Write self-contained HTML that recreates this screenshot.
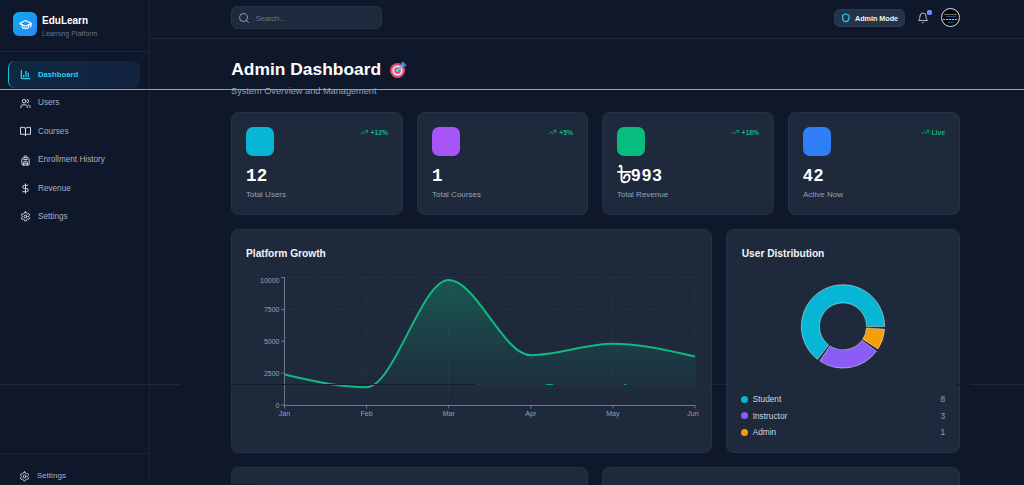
<!DOCTYPE html>
<html><head><meta charset="utf-8"><title>EduLearn Admin Dashboard</title>
<style>
*{box-sizing:border-box;margin:0;padding:0}
html,body{width:1024px;height:485px;overflow:hidden;background:#0f172a;font-family:"Liberation Sans",sans-serif}
.t{position:absolute;white-space:nowrap}
.ic{position:absolute;display:block}
.bx{position:absolute}
.card{position:absolute;background:#1e293b;border:1px solid #243247;border-radius:7.5px}
</style></head><body>
<div class="bx" style="left:149px;top:0;width:1px;height:485px;background:#19233a"></div>
<div class="bx" style="left:0;top:51px;width:149px;height:1px;background:#19233a"></div>
<div class="bx" style="left:0;top:453px;width:149px;height:1px;background:#19233a"></div>
<div class="bx" style="left:13px;top:12px;width:24px;height:24px;border-radius:6px;background:linear-gradient(135deg,#0aaaf0,#2b87f6)"></div>
<svg class="ic" style="left:18.5px;top:17.5px;width:13px;height:13px" viewBox="0 0 24 24" fill="none" stroke="#ffffff" stroke-width="2.2" stroke-linecap="round" stroke-linejoin="round"><path d="M21.42 10.922a1 1 0 0 0-.019-1.838L12.83 5.18a2 2 0 0 0-1.66 0L2.6 9.08a1 1 0 0 0 0 1.832l8.57 3.908a2 2 0 0 0 1.66 0z"/><path d="M22 10v6"/><path d="M6 12.5V16a6 3 0 0 0 12 0v-3.5"/></svg>
<div class="t" style="left:42px;top:16.23px;font-size:10px;line-height:10px;color:#ffffff;font-weight:bold;">EduLearn</div>
<div class="t" style="left:42px;top:30.07px;font-size:7px;line-height:7px;color:#64748b;font-weight:normal;">Learning Platform</div>
<div class="bx" style="left:8px;top:61px;width:132px;height:26.5px;border-radius:6.5px;background:linear-gradient(90deg,#0e2943,#13233f);border-left:1.5px solid #0cc0e0"></div>
<svg class="ic" style="left:19.5px;top:68.9px;width:11px;height:11px" viewBox="0 0 24 24" fill="none" stroke="#22d3ee" stroke-width="2.7" stroke-linecap="round" stroke-linejoin="round"><path d="M3 3v16a2 2 0 0 0 2 2h16"/><path d="M18 17V9"/><path d="M13 17V5"/><path d="M8 17v-3"/></svg>
<div class="t" style="left:38px;top:70.88px;font-size:7.7px;line-height:7.7px;color:#22d3ee;font-weight:bold;">Dashboard</div>
<svg class="ic" style="left:19.5px;top:97.65px;width:11px;height:11px" viewBox="0 0 24 24" fill="none" stroke="#e2e8f0" stroke-width="2" stroke-linecap="round" stroke-linejoin="round"><path d="M16 21v-2a4 4 0 0 0-4-4H6a4 4 0 0 0-4 4v2"/><circle cx="9" cy="7" r="4"/><path d="M22 21v-2a4 4 0 0 0-3-3.87"/><path d="M16 3.13a4 4 0 0 1 0 7.75"/></svg>
<div class="t" style="left:38px;top:99.21px;font-size:8.2px;line-height:8.2px;color:#a3b1c5;font-weight:normal;">Users</div>
<svg class="ic" style="left:19.5px;top:126.10000000000002px;width:11px;height:11px" viewBox="0 0 24 24" fill="none" stroke="#e2e8f0" stroke-width="2" stroke-linecap="round" stroke-linejoin="round"><path d="M2 3h6a4 4 0 0 1 4 4v14a3 3 0 0 0-3-3H2z"/><path d="M22 3h-6a4 4 0 0 0-4 4v14a3 3 0 0 1 3-3h7z"/></svg>
<div class="t" style="left:38px;top:127.66px;font-size:8.2px;line-height:8.2px;color:#a3b1c5;font-weight:normal;">Courses</div>
<svg class="ic" style="left:19.5px;top:154.55px;width:11px;height:11px" viewBox="0 0 24 24" fill="none" stroke="#e2e8f0" stroke-width="2" stroke-linecap="round" stroke-linejoin="round"><path d="M4 10a4 4 0 0 1 4-4h8a4 4 0 0 1 4 4v10a2 2 0 0 1-2 2H6a2 2 0 0 1-2-2Z"/><path d="M8 10h8"/><path d="M8 18h8"/><path d="M8 22v-6a2 2 0 0 1 2-2h4a2 2 0 0 1 2 2v6"/><path d="M9 6V4a2 2 0 0 1 2-2h2a2 2 0 0 1 2 2v2"/></svg>
<div class="t" style="left:38px;top:156.11px;font-size:8.2px;line-height:8.2px;color:#a3b1c5;font-weight:normal;">Enrollment History</div>
<svg class="ic" style="left:19.5px;top:183.0px;width:11px;height:11px" viewBox="0 0 24 24" fill="none" stroke="#e2e8f0" stroke-width="2" stroke-linecap="round" stroke-linejoin="round"><line x1="12" x2="12" y1="2" y2="22"/><path d="M17 5H9.5a3.5 3.5 0 0 0 0 7h5a3.5 3.5 0 0 1 0 7H6"/></svg>
<div class="t" style="left:38px;top:184.56px;font-size:8.2px;line-height:8.2px;color:#a3b1c5;font-weight:normal;">Revenue</div>
<svg class="ic" style="left:19.5px;top:211.45000000000002px;width:11px;height:11px" viewBox="0 0 24 24" fill="none" stroke="#e2e8f0" stroke-width="2" stroke-linecap="round" stroke-linejoin="round"><path d="M12.22 2h-.44a2 2 0 0 0-2 2v.18a2 2 0 0 1-1 1.73l-.43.25a2 2 0 0 1-2 0l-.15-.08a2 2 0 0 0-2.73.73l-.22.38a2 2 0 0 0 .73 2.73l.15.1a2 2 0 0 1 1 1.72v.51a2 2 0 0 1-1 1.74l-.15.09a2 2 0 0 0-.73 2.73l.22.38a2 2 0 0 0 2.73.73l.15-.08a2 2 0 0 1 2 0l.43.25a2 2 0 0 1 1 1.730V20a2 2 0 0 0 2 2h.44a2 2 0 0 0 2-2v-.18a2 2 0 0 1 1-1.73l.43-.25a2 2 0 0 1 2 0l.15.08a2 2 0 0 0 2.73-.73l.22-.39a2 2 0 0 0-.73-2.73l-.15-.08a2 2 0 0 1-1-1.74v-.5a2 2 0 0 1 1-1.74l.15-.09a2 2 0 0 0 .73-2.73l-.22-.38a2 2 0 0 0-2.73-.73l-.15.08a2 2 0 0 1-2 0l-.43-.25a2 2 0 0 1-1-1.73V4a2 2 0 0 0-2-2z"/><circle cx="12" cy="12" r="3"/></svg>
<div class="t" style="left:38px;top:213.01px;font-size:8.2px;line-height:8.2px;color:#a3b1c5;font-weight:normal;">Settings</div>
<svg class="ic" style="left:18.5px;top:470.5px;width:11px;height:11px" viewBox="0 0 24 24" fill="none" stroke="#cbd5e1" stroke-width="2" stroke-linecap="round" stroke-linejoin="round"><path d="M12.22 2h-.44a2 2 0 0 0-2 2v.18a2 2 0 0 1-1 1.73l-.43.25a2 2 0 0 1-2 0l-.15-.08a2 2 0 0 0-2.73.73l-.22.38a2 2 0 0 0 .73 2.73l.15.1a2 2 0 0 1 1 1.72v.51a2 2 0 0 1-1 1.74l-.15.09a2 2 0 0 0-.73 2.73l.22.38a2 2 0 0 0 2.73.73l.15-.08a2 2 0 0 1 2 0l.43.25a2 2 0 0 1 1 1.730V20a2 2 0 0 0 2 2h.44a2 2 0 0 0 2-2v-.18a2 2 0 0 1 1-1.73l.43-.25a2 2 0 0 1 2 0l.15.08a2 2 0 0 0 2.73-.73l.22-.39a2 2 0 0 0-.73-2.73l-.15-.08a2 2 0 0 1-1-1.74v-.5a2 2 0 0 1 1-1.74l.15-.09a2 2 0 0 0 .73-2.73l-.22-.38a2 2 0 0 0-2.73-.73l-.15.08a2 2 0 0 1-2 0l-.43-.25a2 2 0 0 1-1-1.73V4a2 2 0 0 0-2-2z"/><circle cx="12" cy="12" r="3"/></svg>
<div class="t" style="left:36.7px;top:472.44px;font-size:8.1px;line-height:8.1px;color:#a3b1c5;font-weight:normal;">Settings</div>
<div class="bx" style="left:150px;top:38px;width:874px;height:1px;background:#1e293b"></div>
<div class="bx" style="left:231px;top:6px;width:151px;height:23px;border-radius:6px;background:#1e293b;border:1px solid #26344a"></div>
<svg class="ic" style="left:238px;top:12px;width:12px;height:12px" viewBox="0 0 24 24" fill="none" stroke="#94a3b8" stroke-width="1.9" stroke-linecap="round" stroke-linejoin="round"><circle cx="11" cy="11" r="8"/><path d="m21 21-4.3-4.3"/></svg>
<div class="t" style="left:255.5px;top:14.94px;font-size:8.1px;line-height:8.1px;color:#64748b;font-weight:normal;letter-spacing:-0.33px">Search...</div>
<div class="bx" style="left:834px;top:9px;width:71px;height:18px;border-radius:6px;background:#263349;border:1px solid #2e3c53"></div>
<svg class="ic" style="left:841px;top:13.3px;width:9.5px;height:9.5px" viewBox="0 0 24 24" fill="none" stroke="#22d3ee" stroke-width="2.9" stroke-linecap="round" stroke-linejoin="round"><path d="M20 13c0 5-3.5 7.5-7.66 8.95a1 1 0 0 1-.67-.01C7.5 20.5 4 18 4 13V6a1 1 0 0 1 1-1c2 0 4.5-1.2 6.24-2.72a1.17 1.17 0 0 1 1.52 0C14.51 3.81 17 5 19 5a1 1 0 0 1 1 1z"/></svg>
<div class="t" style="left:855px;top:15.11px;font-size:7.2px;line-height:7.2px;color:#f1f5f9;font-weight:bold;">Admin Mode</div>
<svg class="ic" style="left:917px;top:11.8px;width:12px;height:12px" viewBox="0 0 24 24" fill="none" stroke="#cbd5e1" stroke-width="1.7" stroke-linecap="round" stroke-linejoin="round"><path d="M6 8a6 6 0 0 1 12 0c0 7 3 9 3 9H3s3-2 3-9"/><path d="M10.3 21a1.94 1.94 0 0 0 3.4 0"/></svg>
<div class="bx" style="left:927px;top:10px;width:5px;height:4.6px;border-radius:1.5px;background:linear-gradient(135deg,#38bdf8,#a855f7)"></div>
<div class="bx" style="left:940.6px;top:7.8px;width:19.6px;height:19.6px;border-radius:50%;background:#04060a;border:0.8px solid #d8dde5;overflow:hidden"><div class="bx" style="left:2.5px;top:5.4px;width:13px;height:0.7px;background:#6b6a66"></div><div class="bx" style="left:4px;top:7.2px;width:10px;height:0.7px;background:#1e4a8a"></div><div class="bx" style="left:1.5px;top:9.9px;width:15px;height:1.5px;background:repeating-linear-gradient(90deg,#aab4c4 0 2.2px,#2a3550 2.2px 3px)"></div><div class="bx" style="left:6px;top:13.4px;width:6px;height:0.7px;background:#1e4a8a"></div></div>
<div class="t" style="left:231.3px;top:60.97px;font-size:17.4px;line-height:17.4px;color:#ffffff;font-weight:bold;">Admin Dashboard</div>
<svg class="ic" style="left:389px;top:61px;width:18px;height:18px" viewBox="0 0 36 36"><circle cx="17" cy="19" r="15" fill="#e8456b"/><circle cx="17" cy="19" r="10.5" fill="#d6dde4"/><circle cx="17" cy="19" r="6.5" fill="#e8456b"/><circle cx="17" cy="19" r="2.8" fill="#c9d1d9"/><path d="M17 19 L30 6" stroke="#4cc6ee" stroke-width="4" stroke-linecap="round"/><path d="M24.5 3.5 L27 9 L33 11.5 L35.5 8 L30.5 5.5 L28 0.5z" fill="#3b8bf0"/></svg>
<div class="t" style="left:231px;top:86.51px;font-size:9.2px;line-height:9.2px;color:#94a3b8;font-weight:normal;">System Overview and Management</div>
<div class="card" style="left:231px;top:112px;width:172px;height:103px"></div>
<div class="bx" style="left:246px;top:127px;width:28px;height:28.5px;border-radius:7px;background:#06b6d4"></div>
<div class="t" style="right:636px;top:129.84px;font-size:6.8px;line-height:6.8px;color:#10b981;font-weight:bold;">+12%</div>
<svg class="ic" style="left:359.61891875px;top:127.9px;width:8.5px;height:8.5px" viewBox="0 0 24 24" fill="none" stroke="#10b981" stroke-width="2.2" stroke-linecap="round" stroke-linejoin="round"><polyline points="22 7 13.5 15.5 8.5 10.5 2 17"/><polyline points="16 7 22 7 22 13"/></svg>
<div class="t" style="left:246px;top:167.69px;font-size:17.5px;line-height:17.5px;color:#ffffff;font-weight:bold;font-family:'Liberation Mono',monospace;letter-spacing:0.3px">12</div>
<div class="t" style="left:246px;top:190.73px;font-size:8px;line-height:8px;color:#94a3b8;font-weight:normal;">Total Users</div>
<div class="card" style="left:417px;top:112px;width:171px;height:103px"></div>
<div class="bx" style="left:432px;top:127px;width:28px;height:28.5px;border-radius:7px;background:#a855f7"></div>
<div class="t" style="right:451px;top:129.84px;font-size:6.8px;line-height:6.8px;color:#10b981;font-weight:bold;">+5%</div>
<svg class="ic" style="left:548.40078125px;top:127.9px;width:8.5px;height:8.5px" viewBox="0 0 24 24" fill="none" stroke="#10b981" stroke-width="2.2" stroke-linecap="round" stroke-linejoin="round"><polyline points="22 7 13.5 15.5 8.5 10.5 2 17"/><polyline points="16 7 22 7 22 13"/></svg>
<div class="t" style="left:432px;top:167.69px;font-size:17.5px;line-height:17.5px;color:#ffffff;font-weight:bold;font-family:'Liberation Mono',monospace;letter-spacing:0.3px">1</div>
<div class="t" style="left:432px;top:190.73px;font-size:8px;line-height:8px;color:#94a3b8;font-weight:normal;">Total Courses</div>
<div class="card" style="left:602px;top:112px;width:172px;height:103px"></div>
<div class="bx" style="left:617px;top:127px;width:28px;height:28.5px;border-radius:7px;background:#06bd7e"></div>
<div class="t" style="right:265px;top:129.84px;font-size:6.8px;line-height:6.8px;color:#10b981;font-weight:bold;">+18%</div>
<svg class="ic" style="left:730.61891875px;top:127.9px;width:8.5px;height:8.5px" viewBox="0 0 24 24" fill="none" stroke="#10b981" stroke-width="2.2" stroke-linecap="round" stroke-linejoin="round"><polyline points="22 7 13.5 15.5 8.5 10.5 2 17"/><polyline points="16 7 22 7 22 13"/></svg>
<svg class="ic" style="left:614px;top:162px;width:22px;height:24px" viewBox="0 0 22 24" fill="none" stroke="#ffffff" stroke-width="1.9" stroke-linecap="round" stroke-linejoin="round"><path d="M5.4,4.6 C5.4,3.3 7.4,3.1 7.5,4.8 L7.5,17.2 C7.5,19.4 9,20.3 11,20.3 C13.6,20.3 15.6,18.2 15.6,15.2 C15.6,13.2 14.6,12.5 13.1,12.5 C11.6,12.5 10.6,13.6 9.9,16.3"/><path d="M4,9.9 L16.6,9.9"/></svg>
<div class="t" style="left:631px;top:167.04px;font-size:17.2px;line-height:17.2px;color:#ffffff;font-weight:bold;letter-spacing:1.1px">993</div>
<div class="t" style="left:617px;top:190.73px;font-size:8px;line-height:8px;color:#94a3b8;font-weight:normal;">Total Revenue</div>
<div class="card" style="left:788px;top:112px;width:172px;height:103px"></div>
<div class="bx" style="left:803px;top:127px;width:28px;height:28.5px;border-radius:7px;background:#2f7ef8"></div>
<div class="t" style="right:79px;top:129.84px;font-size:6.8px;line-height:6.8px;color:#10b981;font-weight:bold;">Live</div>
<svg class="ic" style="left:920.5933062500001px;top:127.9px;width:8.5px;height:8.5px" viewBox="0 0 24 24" fill="none" stroke="#10b981" stroke-width="2.2" stroke-linecap="round" stroke-linejoin="round"><polyline points="22 7 13.5 15.5 8.5 10.5 2 17"/><polyline points="16 7 22 7 22 13"/></svg>
<div class="t" style="left:803px;top:167.04px;font-size:17.2px;line-height:17.2px;color:#ffffff;font-weight:bold;letter-spacing:1.1px">42</div>
<div class="t" style="left:803px;top:190.73px;font-size:8px;line-height:8px;color:#94a3b8;font-weight:normal;">Active Now</div>
<div class="card" style="left:231px;top:229px;width:481px;height:224px"></div>
<div class="card" style="left:726px;top:229px;width:234px;height:224px"></div>
<div class="t" style="left:246px;top:249.37px;font-size:10.2px;line-height:10.2px;color:#f1f5f9;font-weight:bold;">Platform Growth</div>
<div class="t" style="left:741.7px;top:249.37px;font-size:10.2px;line-height:10.2px;color:#f1f5f9;font-weight:bold;">User Distribution</div>
<svg class="ic" style="left:0;top:0;width:1024px;height:485px" viewBox="0 0 1024 485"><defs><linearGradient id="g1" x1="0" y1="0" x2="0" y2="1"><stop offset="5%" stop-color="#10b981" stop-opacity="0.3"/><stop offset="95%" stop-color="#10b981" stop-opacity="0"/></linearGradient></defs><line x1="284.5" y1="373.125" x2="695.0" y2="373.125" stroke="#334155" stroke-width="0.6" stroke-dasharray="1.8 1.8"/><line x1="284.5" y1="341.25" x2="695.0" y2="341.25" stroke="#334155" stroke-width="0.6" stroke-dasharray="1.8 1.8"/><line x1="284.5" y1="309.375" x2="695.0" y2="309.375" stroke="#334155" stroke-width="0.6" stroke-dasharray="1.8 1.8"/><line x1="284.5" y1="277.5" x2="695.0" y2="277.5" stroke="#334155" stroke-width="0.6" stroke-dasharray="1.8 1.8"/><line x1="366.6" y1="277.5" x2="366.6" y2="405.0" stroke="#334155" stroke-width="0.6" stroke-dasharray="1.8 1.8"/><line x1="448.7" y1="277.5" x2="448.7" y2="405.0" stroke="#334155" stroke-width="0.6" stroke-dasharray="1.8 1.8"/><line x1="530.8" y1="277.5" x2="530.8" y2="405.0" stroke="#334155" stroke-width="0.6" stroke-dasharray="1.8 1.8"/><line x1="612.9" y1="277.5" x2="612.9" y2="405.0" stroke="#334155" stroke-width="0.6" stroke-dasharray="1.8 1.8"/><line x1="695.0" y1="277.5" x2="695.0" y2="405.0" stroke="#334155" stroke-width="0.6" stroke-dasharray="1.8 1.8"/><path d="M284.50,374.40C311.87,380.79 339.23,387.18 366.60,387.18C393.97,387.18 421.33,280.05 448.70,280.05C476.07,280.05 503.43,355.17 530.80,355.17C558.17,355.17 585.53,343.80 612.90,343.80C640.27,343.80 667.63,350.18 695.00,356.55L695.0,405.0L284.5,405.0Z" fill="url(#g1)"/><path d="M284.50,374.40C311.87,380.79 339.23,387.18 366.60,387.18C393.97,387.18 421.33,280.05 448.70,280.05C476.07,280.05 503.43,355.17 530.80,355.17C558.17,355.17 585.53,343.80 612.90,343.80C640.27,343.80 667.63,350.18 695.00,356.55" fill="none" stroke="#10b981" stroke-width="2"/><line x1="284.5" y1="277.5" x2="284.5" y2="405.5" stroke="#6b778a" stroke-width="1"/><line x1="284.5" y1="405.5" x2="695.0" y2="405.5" stroke="#6b778a" stroke-width="1"/><line x1="281.0" y1="405.0" x2="284.5" y2="405.0" stroke="#7a879a" stroke-width="0.8"/><text x="279.5" y="407.5" text-anchor="end" font-size="7" fill="#94a3b8" font-family="Liberation Sans">0</text><line x1="281.0" y1="373.125" x2="284.5" y2="373.125" stroke="#7a879a" stroke-width="0.8"/><text x="279.5" y="375.625" text-anchor="end" font-size="7" fill="#94a3b8" font-family="Liberation Sans">2500</text><line x1="281.0" y1="341.25" x2="284.5" y2="341.25" stroke="#7a879a" stroke-width="0.8"/><text x="279.5" y="343.75" text-anchor="end" font-size="7" fill="#94a3b8" font-family="Liberation Sans">5000</text><line x1="281.0" y1="309.375" x2="284.5" y2="309.375" stroke="#7a879a" stroke-width="0.8"/><text x="279.5" y="311.875" text-anchor="end" font-size="7" fill="#94a3b8" font-family="Liberation Sans">7500</text><line x1="281.0" y1="277.5" x2="284.5" y2="277.5" stroke="#7a879a" stroke-width="0.8"/><text x="279.5" y="282.8" text-anchor="end" font-size="7" fill="#94a3b8" font-family="Liberation Sans">10000</text><line x1="284.5" y1="405.0" x2="284.5" y2="408.5" stroke="#7a879a" stroke-width="0.8"/><text x="284.5" y="415.5" text-anchor="middle" font-size="7" fill="#94a3b8" font-family="Liberation Sans">Jan</text><line x1="366.6" y1="405.0" x2="366.6" y2="408.5" stroke="#7a879a" stroke-width="0.8"/><text x="366.6" y="415.5" text-anchor="middle" font-size="7" fill="#94a3b8" font-family="Liberation Sans">Feb</text><line x1="448.7" y1="405.0" x2="448.7" y2="408.5" stroke="#7a879a" stroke-width="0.8"/><text x="448.7" y="415.5" text-anchor="middle" font-size="7" fill="#94a3b8" font-family="Liberation Sans">Mar</text><line x1="530.8" y1="405.0" x2="530.8" y2="408.5" stroke="#7a879a" stroke-width="0.8"/><text x="530.8" y="415.5" text-anchor="middle" font-size="7" fill="#94a3b8" font-family="Liberation Sans">Apr</text><line x1="612.9" y1="405.0" x2="612.9" y2="408.5" stroke="#7a879a" stroke-width="0.8"/><text x="612.9" y="415.5" text-anchor="middle" font-size="7" fill="#94a3b8" font-family="Liberation Sans">May</text><line x1="695.0" y1="405.0" x2="695.0" y2="408.5" stroke="#7a879a" stroke-width="0.8"/><text x="693.0" y="415.5" text-anchor="middle" font-size="7" fill="#94a3b8" font-family="Liberation Sans">Jun</text><path d="M884.70,326.40A41.7,41.7 0 1 0 817.56,359.44L828.66,345.02A23.5,23.5 0 1 1 866.50,326.40Z" fill="#06b6d4" stroke="#ffffff" stroke-opacity="0.8" stroke-width="0.55"/><path d="M819.80,361.05A41.7,41.7 0 0 0 876.46,351.29L861.85,340.43A23.5,23.5 0 0 1 829.93,345.93Z" fill="#8b5cf6" stroke="#ffffff" stroke-opacity="0.8" stroke-width="0.55"/><path d="M878.03,349.02A41.7,41.7 0 0 0 884.61,329.16L866.45,327.96A23.5,23.5 0 0 1 862.74,339.15Z" fill="#f59e0b" stroke="#ffffff" stroke-opacity="0.8" stroke-width="0.55"/></svg>
<div class="bx" style="left:741px;top:395.5px;width:7px;height:7px;border-radius:50%;background:#06b6d4"></div>
<div class="t" style="left:752.7px;top:395.37px;font-size:8.3px;line-height:8.3px;color:#cbd5e1;font-weight:normal;">Student</div>
<div class="t" style="right:79px;top:395.37px;font-size:8.3px;line-height:8.3px;color:#94a3b8;font-weight:normal;">8</div>
<div class="bx" style="left:741px;top:412.0px;width:7px;height:7px;border-radius:50%;background:#8b5cf6"></div>
<div class="t" style="left:752.7px;top:411.87px;font-size:8.3px;line-height:8.3px;color:#cbd5e1;font-weight:normal;">Instructor</div>
<div class="t" style="right:79px;top:411.87px;font-size:8.3px;line-height:8.3px;color:#94a3b8;font-weight:normal;">3</div>
<div class="bx" style="left:741px;top:428.5px;width:7px;height:7px;border-radius:50%;background:#f59e0b"></div>
<div class="t" style="left:752.7px;top:428.37px;font-size:8.3px;line-height:8.3px;color:#cbd5e1;font-weight:normal;">Admin</div>
<div class="t" style="right:79px;top:428.37px;font-size:8.3px;line-height:8.3px;color:#94a3b8;font-weight:normal;">1</div>
<div class="card" style="left:231px;top:467px;width:357px;height:60px"></div>
<div class="card" style="left:602px;top:467px;width:358px;height:60px"></div>
<div class="bx" style="left:0;top:484px;width:259px;height:1px;background:#1e1e26"></div>
<div class="bx" style="left:0;top:89px;width:1024px;height:1px;background:#38ee22"></div>
<div class="bx" style="left:0;top:384px;width:180px;height:1px;background:#1e293b"></div>
<div class="bx" style="left:231px;top:384px;width:244px;height:1px;background:#131b2c"></div>
<div class="bx" style="left:475px;top:384px;width:236px;height:1px;background:rgba(255,255,255,0.025)"></div>
<div class="bx" style="left:546px;top:384px;width:7px;height:1px;background:rgba(16,185,129,0.8)"></div>
<div class="bx" style="left:624px;top:384px;width:2px;height:1px;background:rgba(16,185,129,0.8)"></div>
<div class="bx" style="left:712px;top:384px;width:14px;height:1px;background:#1c2638"></div>
<div class="bx" style="left:727px;top:384px;width:212px;height:1px;background:#1c3041"></div>
<div class="bx" style="left:956px;top:384px;width:4px;height:1px;background:#151d2e"></div>
<div class="bx" style="left:970px;top:384px;width:54px;height:1px;background:#1e293b"></div>
</body></html>
